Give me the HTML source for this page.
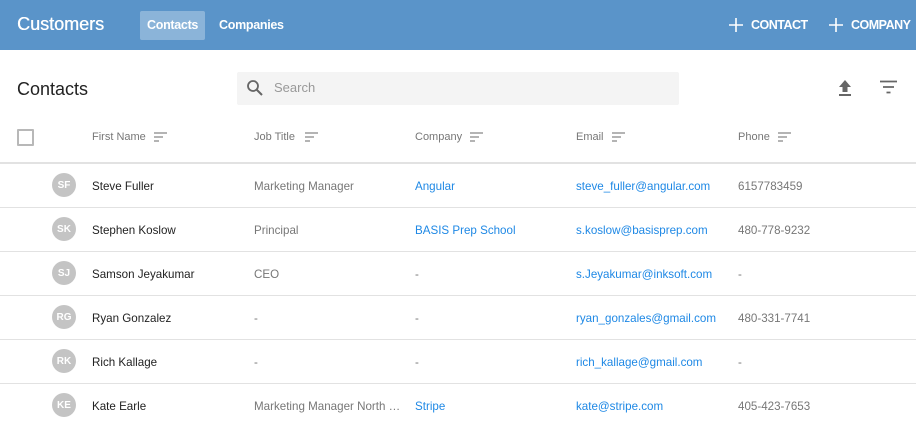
<!DOCTYPE html>
<html><head><meta charset="utf-8"><style>
*{box-sizing:border-box;margin:0;padding:0}
body{width:916px;height:422px;overflow:hidden;background:#fff;font-family:"Liberation Sans",sans-serif;position:relative}
.bar{position:absolute;left:0;top:0;width:916px;height:50px;background:#5a94c9;color:#fff}
.a{position:absolute;white-space:nowrap}
.t{font-size:11.6px;color:#222;margin-top:1px}
.g{font-size:11.6px;color:#777;margin-top:1px}
.l{font-size:11.6px;color:#1e88e5;margin-top:1px}
.h{font-size:11px;color:#777}
.line{position:absolute;left:0;width:916px;height:1px;background:#e2e2e2}
.av{position:absolute;left:52px;width:24px;height:24px;border-radius:12px;background:#c4c4c4;color:#fff;font-size:10px;font-weight:bold;display:flex;align-items:center;justify-content:center}
</style></head><body>
<div class="bar">
<div class="a" style="left:17px;top:14px;font-size:18px;text-shadow:0.4px 0 0 #fff">Customers</div>
<div class="a" style="left:140px;top:11px;width:65px;height:29px;background:rgba(255,255,255,0.3);border-radius:2px"></div>
<div class="a" style="left:147px;top:18px;font-size:12.5px;font-weight:bold;letter-spacing:-0.3px">Contacts</div>
<div class="a" style="left:219px;top:18px;font-size:12.5px;font-weight:bold;letter-spacing:-0.3px">Companies</div>
<svg class="a" style="left:729px;top:18px" width="14" height="14"><path d="M7 0V14M0 7H14" stroke="#fff" stroke-width="1.6"/></svg>
<div class="a" style="left:751px;top:18px;font-size:12.5px;font-weight:bold;letter-spacing:-0.5px">CONTACT</div>
<svg class="a" style="left:829px;top:18px" width="14" height="14"><path d="M7 0V14M0 7H14" stroke="#fff" stroke-width="1.6"/></svg>
<div class="a" style="left:851px;top:18px;font-size:12.5px;font-weight:bold;letter-spacing:-0.5px">COMPANY</div>
</div>
<div class="a" style="left:17px;top:79px;font-size:18px;color:#222">Contacts</div>
<div class="a" style="left:237px;top:72px;width:442px;height:33px;background:#f4f4f4;border-radius:2px"></div>
<svg class="a" style="left:246px;top:79px" width="18" height="18"><circle cx="7" cy="7" r="5" fill="none" stroke="#666" stroke-width="1.8"/><path d="M10.5 10.5L16 16" stroke="#666" stroke-width="2"/></svg>
<div class="a" style="left:274px;top:80px;font-size:13px;color:#999">Search</div>
<svg class="a" style="left:837px;top:79px" width="16" height="18"><path d="M8 1L2 8H5.5V13H10.5V8H14Z M2 15H14V17H2Z" fill="#666"/></svg>
<svg class="a" style="left:880px;top:80px" width="17" height="14"><path d="M0 1.5H17M3 7H14M6.5 12.5H10.5" stroke="#666" stroke-width="1.8"/></svg>
<div class="a" style="left:17px;top:129px;width:17px;height:17px;border:2px solid #b8b8b8;border-radius:1px"></div>
<div class="a h" style="left:92px;top:131px">First Name</div>
<div class="a h" style="left:254px;top:131px">Job Title</div>
<div class="a h" style="left:415px;top:131px">Company</div>
<div class="a h" style="left:576px;top:131px">Email</div>
<div class="a h" style="left:738px;top:131px">Phone</div>
<svg class="a" style="left:154px;top:132px" width="13" height="10"><path d="M0 1H13M0 5H9M0 9H5" stroke="#888" stroke-width="1.2"/></svg>
<svg class="a" style="left:305px;top:132px" width="13" height="10"><path d="M0 1H13M0 5H9M0 9H5" stroke="#888" stroke-width="1.2"/></svg>
<svg class="a" style="left:470px;top:132px" width="13" height="10"><path d="M0 1H13M0 5H9M0 9H5" stroke="#888" stroke-width="1.2"/></svg>
<svg class="a" style="left:612px;top:132px" width="13" height="10"><path d="M0 1H13M0 5H9M0 9H5" stroke="#888" stroke-width="1.2"/></svg>
<svg class="a" style="left:778px;top:132px" width="13" height="10"><path d="M0 1H13M0 5H9M0 9H5" stroke="#888" stroke-width="1.2"/></svg>
<div class="line" style="top:162px;height:2px"></div>

<div class="av" style="top:173px">SF</div>
<div class="a t" style="left:92px;top:179px">Steve Fuller</div>
<div class="a g" style="left:254px;top:179px">Marketing Manager</div>
<div class="a l" style="left:415px;top:179px">Angular</div>
<div class="a l" style="left:576px;top:179px">steve_fuller@angular.com</div>
<div class="a g" style="left:738px;top:179px">6157783459</div>
<div class="line" style="top:207px"></div>

<div class="av" style="top:217px">SK</div>
<div class="a t" style="left:92px;top:223px">Stephen Koslow</div>
<div class="a g" style="left:254px;top:223px">Principal</div>
<div class="a l" style="left:415px;top:223px">BASIS Prep School</div>
<div class="a l" style="left:576px;top:223px">s.koslow@basisprep.com</div>
<div class="a g" style="left:738px;top:223px">480-778-9232</div>
<div class="line" style="top:251px"></div>

<div class="av" style="top:261px">SJ</div>
<div class="a t" style="left:92px;top:267px">Samson Jeyakumar</div>
<div class="a g" style="left:254px;top:267px">CEO</div>
<div class="a g" style="left:415px;top:267px">-</div>
<div class="a l" style="left:576px;top:267px">s.Jeyakumar@inksoft.com</div>
<div class="a g" style="left:738px;top:267px">-</div>
<div class="line" style="top:295px"></div>

<div class="av" style="top:305px">RG</div>
<div class="a t" style="left:92px;top:311px">Ryan Gonzalez</div>
<div class="a g" style="left:254px;top:311px">-</div>
<div class="a g" style="left:415px;top:311px">-</div>
<div class="a l" style="left:576px;top:311px">ryan_gonzales@gmail.com</div>
<div class="a g" style="left:738px;top:311px">480-331-7741</div>
<div class="line" style="top:339px"></div>

<div class="av" style="top:349px">RK</div>
<div class="a t" style="left:92px;top:355px">Rich Kallage</div>
<div class="a g" style="left:254px;top:355px">-</div>
<div class="a g" style="left:415px;top:355px">-</div>
<div class="a l" style="left:576px;top:355px">rich_kallage@gmail.com</div>
<div class="a g" style="left:738px;top:355px">-</div>
<div class="line" style="top:383px"></div>

<div class="av" style="top:393px">KE</div>
<div class="a t" style="left:92px;top:399px">Kate Earle</div>
<div class="a g" style="left:254px;top:399px">Marketing Manager North …</div>
<div class="a l" style="left:415px;top:399px">Stripe</div>
<div class="a l" style="left:576px;top:399px">kate@stripe.com</div>
<div class="a g" style="left:738px;top:399px">405-423-7653</div>
</body></html>
